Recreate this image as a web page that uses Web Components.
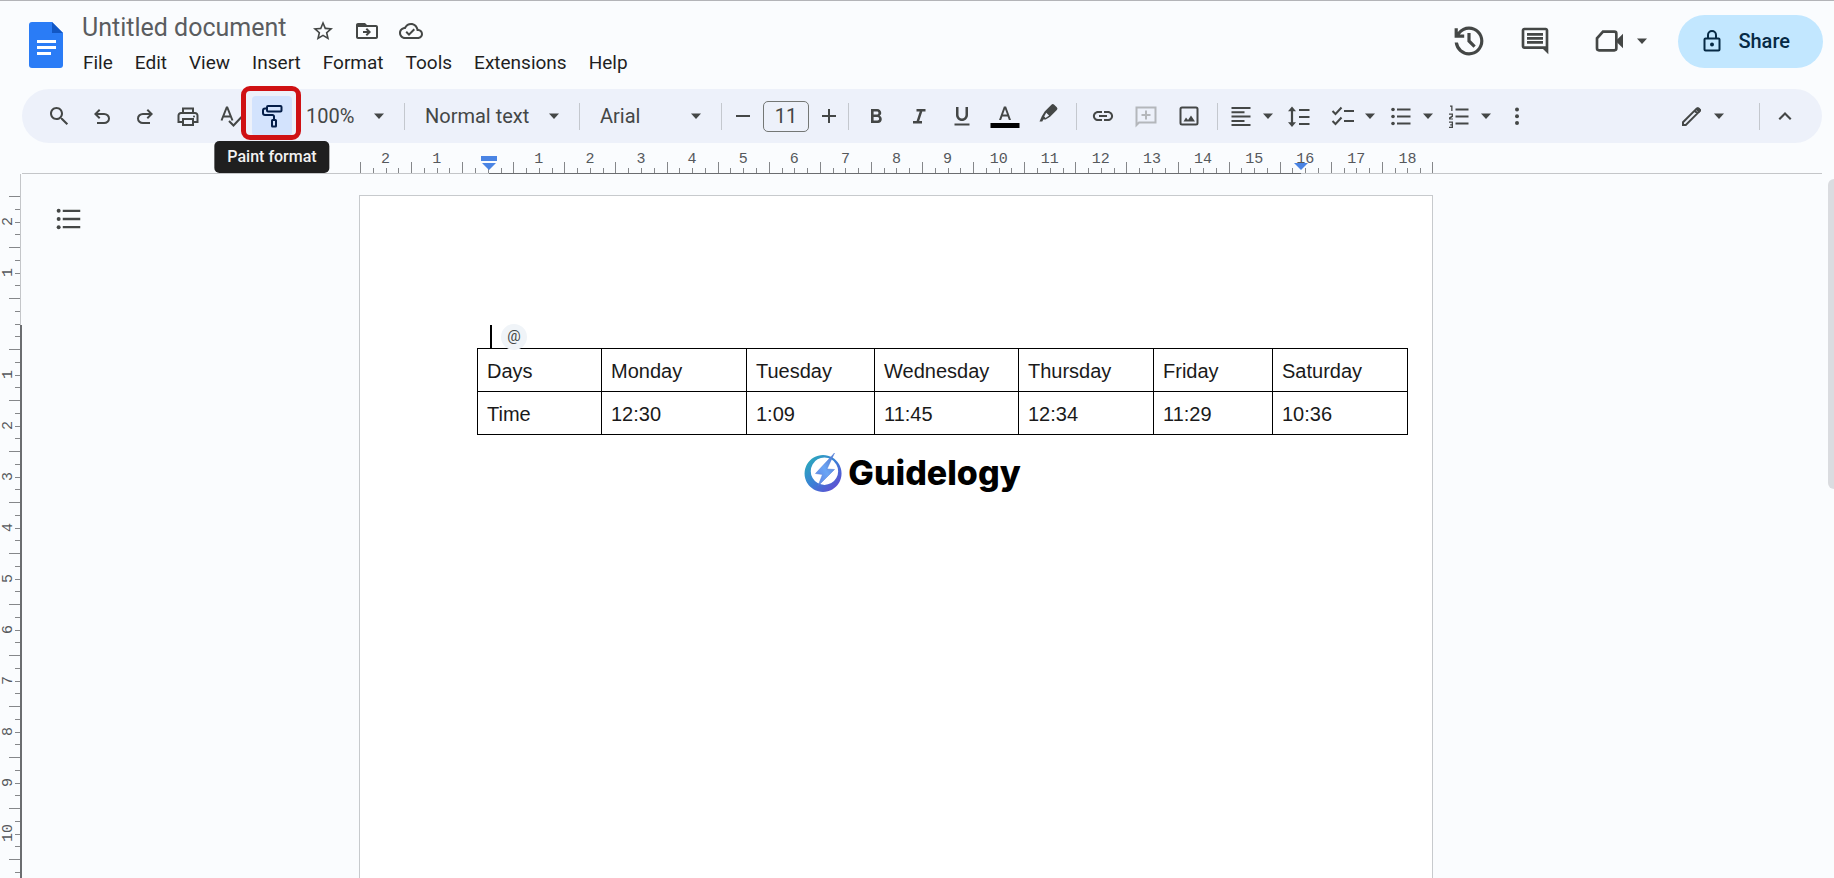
<!DOCTYPE html>
<html lang="en">
<head>
<meta charset="utf-8">
<title>Untitled document</title>
<style>
  body { margin: 0; font-family: Roboto, "Liberation Sans", sans-serif; background: #fafcfe; color: #444746; }
</style>
</head>
<body>
<docs-app></docs-app>
<script>
const ICONS = {
  star: '<path d="M22 9.24l-7.19-.62L12 2 9.19 8.63 2 9.24l5.46 4.73L5.82 21 12 17.27 18.18 21l-1.63-7.03L22 9.24zM12 15.4l-3.76 2.27 1-4.28-3.32-2.88 4.38-.38L12 6.1l1.71 4.04 4.38.38-3.32 2.88 1 4.28L12 15.4z"/>',
  move: '<path d="M21 6h-9l-2-2H3c-1.100 0-2 .9-2 2v12c0 1.100.9 2 2 2h18c1.100 0 2-.9 2-2V8c0-1.100-.9-2-2-2zm0 12H3V8h18v10z"/><path d="M12 17l4-4-4-4-1.400 1.400 1.600 1.600H8v2h4.200l-1.600 1.600z"/>',
  cloud: '<path d="M19.35 10.04C18.67 6.59 15.64 4 12 4 9.110 4 6.610 5.640 5.360 8.040 2.350 8.360 0 10.900 0 14c0 3.310 2.690 6 6 6h13c2.760 0 5-2.240 5-5 0-2.640-2.050-4.780-4.650-4.960zM19 18H6c-2.210 0-4-1.790-4-4 0-2.050 1.530-3.760 3.560-3.970l1.070-.11.5-.95C8.080 7.140 9.940 6 12 6c2.620 0 4.880 1.860 5.390 4.430l.3 1.500 1.530.11c1.560.1 2.780 1.410 2.780 2.960 0 1.650-1.350 3-3 3zm-9-3.820l-2.090-2.090L6.500 13.500 10 17l6.010-6.010-1.410-1.410z"/>',
  search: '<path d="M15.5 14h-.79l-.28-.27C15.41 12.59 16 11.11 16 9.5 16 5.91 13.09 3 9.5 3S3 5.91 3 9.5 5.91 16 9.5 16c1.61 0 3.09-.59 4.23-1.57l.27.28v.79l5.600 5.600 1.490-1.490zm-6 0C7.01 14 5 11.99 5 9.5S7.01 5 9.5 5 14 7.01 14 9.5 11.99 14 9.5 14z"/>',
  undo: '<path d="M7 20v-2h7.1q1.575 0 2.737-1T18 14.500 16.838 12 14.1 11H7.8l2.6 2.6L9 15 4 10l5-5 1.4 1.4L7.8 9h6.3q2.425 0 4.163 1.575T20 14.500t-1.737 3.925T14.1 20z"/>',
  redo: '<g transform="matrix(-1 0 0 1 24 0)"><path d="M7 20v-2h7.1q1.575 0 2.737-1T18 14.500 16.838 12 14.1 11H7.8l2.6 2.6L9 15 4 10l5-5 1.4 1.4L7.8 9h6.3q2.425 0 4.163 1.575T20 14.500t-1.737 3.925T14.1 20z"/></g>',
  print: '<g class="s"><path d="M7 9V4.500h10V9M7 18H2.500v-6.500A2.500 2.500 0 0 1 5 9h14a2.500 2.500 0 0 1 2.500 2.500V18H17M7 15h10v6H7z"/></g><circle cx="18" cy="12.500" r="1"/>',
  spell: '<g class="s"><path d="M2.500 16.500 7.700 3.500h.6l5.200 13M4.500 12.500h7M10 17l4.500 4.500 8-8.500"/></g>',
  paint: '<g class="s"><rect x="7" y="2" width="14.500" height="5.500" rx="1"/><path d="M7 4.500H5A2 2 0 0 0 3 6.500V9a2 2 0 0 0 2 2h7.500a1.500 1.500 0 0 1 1.500 1.500V16"/><rect x="12" y="16" width="4" height="6.500" rx=".5"/></g>',
  minus: '<path d="M5 11h14v2H5z"/>',
  plus: '<path d="M5 11h6V5h2v6h6v2h-6v6h-2v-6H5z"/>',
  bold: '<path d="M15.6 11.790c.97-.67 1.65-1.770 1.65-2.790 0-2.260-1.750-4-4-4H7v14h7.040c2.090 0 3.710-1.700 3.710-3.790 0-1.520-.86-2.820-2.150-3.420zM9.600 7.500h3.400c.83 0 1.500.67 1.500 1.500s-.67 1.500-1.500 1.500H9.600v-3zm3.900 9H9.600v-3.500h3.900c.96 0 1.600.8 1.600 1.750s-.64 1.750-1.600 1.750z"/>',
  italic: '<path d="M9.500 5v2.500h3.200l-3.100 9.500H6v2.500h9v-2.500h-2.800l3.100-9.500H18.500V5z"/>',
  underline: '<path d="M12 17c3.310 0 6-2.690 6-6V3h-2.500v8c0 1.930-1.570 3.500-3.500 3.500S8.500 12.930 8.500 11V3H6v8c0 3.310 2.690 6 6 6zm-7.500 2.500v2h15v-2z"/>',
  color: '<path d="M6 16h2.100l1.300-3.600h5.200L15.900 16H18L13.100 2.500h-2.200L6 16zm4-5.400 1.950-5.400h.1L14 10.600h-4z"/><path fill="#000" d="M-2.500 19h29v5h-29z"/>',
  marker: '<g transform="translate(0 -3)"><path fill-rule="evenodd" d="M3.500 20.500l2.300-5.200 2.900-4.900 6.700-6.700a2 2 0 0 1 2.800 0l2.600 2.600a2 2 0 0 1 0 2.800l-6.700 6.700-4.400 2.700h-2.400l-1 2zM10.200 11.700l2.900 2.900-3.500 2.300-1.400-1.400z"/></g>',
  link: '<path d="M3.9 12c0-1.71 1.39-3.1 3.1-3.1h4V6.900H7c-2.76 0-5.100 2.340-5.100 5.100s2.340 5.100 5.100 5.100h4v-2H7c-1.71 0-3.1-1.39-3.1-3.1zM8 13h8v-2H8v2zm9-6.100h-4v2h4c1.71 0 3.1 1.39 3.1 3.1s-1.39 3.1-3.1 3.1h-4v2h4c2.76 0 5.100-2.340 5.100-5.100s-2.340-5.100-5.100-5.100z"/>',
  addcomment: '<g class="s"><path d="M2.500 21V3.500h19v15H5L2.500 21zM12 6.500v9M7.500 11h9"/></g>',
  image: '<g class="s"><rect x="3.500" y="3.500" width="17" height="17" rx="1.500"/></g><path d="M6.500 17.500l2.500-4 2 2.500 3-4.500 4 6z"/>',
  align: '<path d="M2.500 3h19v2h-19zM2.500 7.300h13v2h-13zM2.500 11.600h19v2h-19zM2.500 15.900h13v2h-13zM2.500 20.100h19v2h-19z"/>',
  spacing: '<path d="M12 5h10.500v2H12zM12 12h10.500v2H12zM12 19h10.500v2H12zM5 2.500 9 7.300H6.100v10.900H9l-4 4.800-4-4.800h2.900V7.300H1z"/>',
  checklist: '<path d="M13 6h10v2H13zM13 16h10v2H13z"/><g class="s"><path d="M1.500 7l3 3L10.500 3.500M1.500 17l3 3 6-6.500"/></g>',
  bullets: '<circle cx="4" cy="5.500" r="1.800"/><circle cx="4" cy="12.500" r="1.800"/><circle cx="4" cy="19.500" r="1.800"/><path d="M8 4.500h13.500v2H8zM8 11.500h13.500v2H8zM8 18.500h13.500v2H8z"/>',
  numbered: '<path d="M8.500 4.500h13v2h-13zM8.500 11.500h13v2h-13zM8.500 18.500h13v2h-13zM3 1.500h2.500v5.500H4.200V2.700H3zM2 9.500h4v3.200l-2.600 1.700H6v1.200H2v-2l2.700-1.800v-1.100H2zM2 17.500h4V24H2v-1.200h2.700v-1.400H3.200v-1.200h1.500v-1.500H2z"/>',
  dots: '<circle cx="12" cy="5.500" r="2"/><circle cx="12" cy="12.300" r="2"/><circle cx="12" cy="19" r="2"/>',
  pencil: '<g class="s"><path d="M3 21v-2.800L16.600 4.600a1.200 1.200 0 0 1 1.700 0l1.100 1.100a1.200 1.200 0 0 1 0 1.700L5.800 21zM14.500 6.500l3 3"/></g><path d="M15.500 5.500l2-2h1.500l2 2V7l-2 2z"/>',
  up: '<path d="M12 8l-6.500 6.500 1.500 1.500L12 11l5 5 1.500-1.500z"/>',
  history: '<path d="M12 21q-3.450 0-6.013-2.288T3.050 13H5.100q.35 2.600 2.313 4.300T12 19q2.925 0 4.963-2.037T19 12t-2.037-4.963T12 5q-1.725 0-3.225.8T6.250 8H9v2H3V4h2v2.350q1.275-1.600 3.113-2.475T12 3q1.875 0 3.513.713t2.850 1.924 1.925 2.850T21 12t-.712 3.513-1.925 2.850-2.850 1.925T12 21m2.800-4.800L11 12.400V7h2v4.600l3.200 3.200z"/>',
  comment: '<path d="M21.990 4c0-1.100-.89-2-1.990-2H4c-1.100 0-2 .9-2 2v12c0 1.100.9 2 2 2h14l4 4-.01-18zM20 4v12H4V4h16zM6 12h12v2H6zm0-3h12v2H6zm0-3h12v2H6z"/>',
  video: '<g class="s"><path d="M7.500 5h8.500a1.500 1.500 0 0 1 1.500 1.500v11a1.500 1.500 0 0 1-1.500 1.500H4.500A1.500 1.500 0 0 1 3 17.500V10z"/></g><path d="M17 12l5.500-5.500v11z"/>',
  lock: '<g class="s"><rect x="4.500" y="9.500" width="15" height="12" rx="1"/><path d="M8 9.500V6a4 4 0 0 1 8 0v3.500"/></g><circle cx="12" cy="15.500" r="2"/>',
  outline: '<circle cx="4" cy="5" r="1.700"/><circle cx="4" cy="12" r="1.700"/><circle cx="4" cy="19" r="1.700"/><path d="M7.500 4h15v2h-15zM7.500 11h15v2h-15zM7.500 18h15v2h-15z"/>',
  arrow: '<path d="M0 6h24L12 19z"/>'
};
const VIEWBOX = { history: '2 2 20 20' };

class Base extends HTMLElement {
  connectedCallback() {
    if (this.shadowRoot) return;
    this.attachShadow({ mode: 'open' }).innerHTML =
      `<style>*{box-sizing:border-box}${this.constructor.css}</style>${this.render()}`;
  }
}

class DocsIcon extends Base {
  static css = `
    :host { display: block; flex: none; width: var(--icon, 24px); height: var(--icon, 24px); }
    :host([name=arrow]) { width: 10px; height: 10px; }
    svg { display: block; width: 100%; height: 100%; fill: currentColor; overflow: visible; }
    .s { fill: none; stroke: currentColor; stroke-width: 2; }`;
  render() {
    const n = this.getAttribute('name');
    return `<svg viewBox="${VIEWBOX[n] || '0 0 24 24'}" aria-hidden="true">${ICONS[n]}</svg>`;
  }
}

class ToolButton extends Base {
  static css = `
    :host { display: block; position: relative; flex: none; width: 43px; }
    :host([narrow]) { width: 24px; }
    :host([menu]) { width: 44px; }
    :host([active]) { width: 40px; }
    button { display: flex; align-items: center; justify-content: center; gap: 10px; width: 100%; height: 40px;
      padding: 0; border: 0; border-radius: 4px; background: none; color: inherit; font: inherit; }
    :host([menu]) button { justify-content: flex-start; }
    :host([active]) button { background: #d3e3fd; color: #041e49; }
    :host([off]) { color: #b4b7bb; }`;
  render() {
    const icon = this.getAttribute('icon'), label = this.getAttribute('label');
    return `<button type="button" aria-label="${label}" ${this.hasAttribute('off') ? 'disabled style="color:inherit"' : ''}>
      <docs-icon name="${icon}"></docs-icon>${this.hasAttribute('menu') ? '<docs-icon name="arrow"></docs-icon>' : ''}
    </button><slot></slot>`;
  }
}

class ToolSelect extends Base {
  static css = `
    :host { display: grid; flex: none; align-items: center; }
    select { grid-area: 1 / 1; appearance: none; width: 100%; height: 40px; border: 0; padding: 0 16px 0 0;
      background: none; color: inherit; font: 20px Roboto, sans-serif; }
    docs-icon { grid-area: 1 / 1; justify-self: end; pointer-events: none; }`;
  render() {
    return `<select aria-label="${this.getAttribute('label')}"><option>${this.getAttribute('value')}</option></select>
      <docs-icon name="arrow"></docs-icon>`;
  }
}

class DocsTooltip extends Base {
  static css = `
    :host { display: block; position: absolute; z-index: 3; top: 45px; left: 50%; transform: translateX(-50%);
      padding: 0 13px; border-radius: 5px; background: #1f1f1f; color: #f2f2f2;
      font-size: 16px; font-weight: 500; line-height: 32px; white-space: nowrap; }`;
  render() { return '<slot></slot>'; }
}

class CalloutFrame extends Base {
  static css = `
    :host { display: block; position: absolute; z-index: 2; inset: -10px -9px -4px -11px; pointer-events: none;
      border: 5px solid #cf1114; border-radius: 9px; }`;
  render() { return ''; }
}

class DocsMenuBar extends Base {
  static css = `
    :host { display: block; }
    nav { display: flex; gap: 20px; }
    button { padding: 0 1px; border: 0; background: none; color: #1f1f1f; font: 19px/28px Roboto, sans-serif; }`;
  render() {
    return `<nav aria-label="Menu bar">${['File', 'Edit', 'View', 'Insert', 'Format', 'Tools', 'Extensions', 'Help']
      .map(t => `<button type="button">${t}</button>`).join('')}</nav>`;
  }
}

class DocsHeader extends Base {
  static css = `
    :host { display: flex; align-items: flex-start; height: 89px; padding: 12px 11px 0 29px; border-top: 1px solid #b3b4b8; }
    .logo { flex: none; width: 34px; height: 46px; margin-top: 9px; }
    .names { margin-left: 19px; }
    .title { display: flex; align-items: flex-end; gap: 20px; height: 30px; margin-bottom: 6px; }
    input { width: 209px; height: 30px; padding: 0; border: 0; background: none; color: #5a5d60; font: 25px/30px Roboto, sans-serif; }
    button { display: flex; align-items: center; padding: 0; border: 0; background: none; color: inherit; }
    .actions { --icon: 32px; display: flex; align-items: center; gap: 34px; height: 54px; margin: 1px 0 0 auto; }
    .meet { gap: 12px; margin-left: 8px; }
    .share { --icon: 24px; gap: 14px; height: 53px; margin-left: -3px; padding: 0 33px 0 22px; border-radius: 27px;
      background: #c2e7ff; color: #062a45; font: 500 20px Roboto, sans-serif; }`;
  render() {
    return `
      <svg class="logo" viewBox="0 0 34 46" role="img" aria-label="Docs">
        <path fill="#2a7cf6" d="M3 0h20l11 11v32a3 3 0 0 1-3 3H3a3 3 0 0 1-3-3V3a3 3 0 0 1 3-3z"/>
        <path fill="#1257c4" d="M23 0l11 11H23z"/>
        <path fill="#fff" d="M8 18h19v3H8zM8 24h19v3H8zM8 30h14v3H8z"/>
      </svg>
      <div class="names">
        <div class="title">
          <input type="text" aria-label="Document title" value="Untitled document">
          <button type="button" aria-label="Star"><docs-icon name="star"></docs-icon></button>
          <button type="button" aria-label="Move"><docs-icon name="move"></docs-icon></button>
          <button type="button" aria-label="See document status"><docs-icon name="cloud"></docs-icon></button>
        </div>
        <docs-menu-bar></docs-menu-bar>
      </div>
      <div class="actions">
        <button type="button" aria-label="Version history"><docs-icon name="history"></docs-icon></button>
        <button type="button" aria-label="Comments"><docs-icon name="comment"></docs-icon></button>
        <button type="button" class="meet" aria-label="Join a call"><docs-icon name="video"></docs-icon><docs-icon name="arrow"></docs-icon></button>
        <button type="button" class="share"><docs-icon name="lock"></docs-icon>Share</button>
      </div>`;
  }
}

class DocsToolbar extends Base {
  static css = `
    :host { display: flex; align-items: center; height: 54px; margin: 0 12px 0 22px; padding: 0 25px 0 15px;
      border-radius: 27px; background: #edf1fa; }
    .group { display: flex; align-items: center; flex: none; }
    .rule { flex: none; width: 1px; height: 27px; background: #c4c8ce; }
    .rule.wide { margin: 0 20px; }
    .rule.before { margin-left: 20px; }
    .zoom { width: 78px; margin-left: 14px; }
    .style { width: 134px; }
    .font { width: 101px; }
    .size { gap: 8px; padding: 0 7px 0 9px; }
    .size input { width: 46px; height: 31px; padding: 0; border: 1px solid #747775; border-radius: 5px; background: none;
      color: inherit; font: 20px Roboto, sans-serif; text-align: center; }
    .format { padding: 0 7px 0 5px; }
    .link { padding: 0 7px 0 4px; }
    .para { gap: 14px; padding-left: 11px; }
    .para .line { margin-right: 6px; }
    .mode { margin-left: auto; }
    .mode .rule { margin: 0 13px 0 35px; }`;
  render() {
    const b = (icon, label, extra = '') => `<tool-button icon="${icon}" label="${label}" ${extra}></tool-button>`;
    return `
      <div class="group">
        ${b('search', 'Search the menus')}${b('undo', 'Undo')}${b('redo', 'Redo')}${b('print', 'Print')}${b('spell', 'Spelling and grammar check')}
        <tool-button icon="paint" label="Paint format" active><callout-frame></callout-frame><docs-tooltip>Paint format</docs-tooltip></tool-button>
      </div>
      <tool-select class="zoom" label="Zoom" value="100%"></tool-select><span class="rule wide"></span>
      <tool-select class="style" label="Styles" value="Normal text"></tool-select><span class="rule wide"></span>
      <tool-select class="font" label="Font" value="Arial"></tool-select><span class="rule before"></span>
      <div class="group size">
        ${b('minus', 'Decrease font size', 'narrow')}
        <input type="text" inputmode="numeric" aria-label="Font size" value="11">
        ${b('plus', 'Increase font size', 'narrow')}
      </div><span class="rule"></span>
      <div class="group format">
        ${b('bold', 'Bold')}${b('italic', 'Italic')}${b('underline', 'Underline')}${b('color', 'Text color')}${b('marker', 'Highlight color')}
      </div><span class="rule"></span>
      <div class="group link">
        ${b('link', 'Insert link')}${b('addcomment', 'Add comment', 'off')}${b('image', 'Insert image')}
      </div><span class="rule"></span>
      <div class="group para">
        ${b('align', 'Align', 'menu')}${b('spacing', 'Line spacing', 'narrow class="line"')}${b('checklist', 'Checklist', 'menu')}
        ${b('bullets', 'Bulleted list', 'menu')}${b('numbered', 'Numbered list', 'menu')}${b('dots', 'More', 'narrow')}
      </div>
      <div class="group mode">
        ${b('pencil', 'Editing mode', 'menu')}<span class="rule"></span>${b('up', 'Hide the menus', 'narrow')}
      </div>`;
  }
}

const cells = (n, extra = 0) =>
  ['2', '1', '', ...Array.from({ length: n }, (_, i) => String(i + 1)), ...Array(extra).fill('')]
    .map(t => `<div class="cell"><b>${t}</b><div class="ticks"><i></i><i></i><i></i><i></i></div></div>`).join('');

class RulerHorizontal extends Base {
  static css = `
    :host { display: grid; grid-template-columns: 1fr 1074px 1fr; flex: none; height: 31px; margin-left: 22px; padding-right: 64px;
      position: relative; font: 15px/16px "Liberation Mono", monospace; color: #55585c; }
    .base { position: absolute; inset: auto 12px 0 0; height: 1px; background: #c4c6c9; }
    .strip { grid-column: 2; position: relative; display: grid; grid-template-columns: repeat(21, 1fr); margin-left: 1px;
      padding-bottom: 1px; background: linear-gradient(90deg, #0000 12%, #6b6d70 12% 87.700%, #0000 87.700%) bottom / 100% 1px no-repeat; }
    .cell { display: grid; }
    .cell b { grid-area: 1 / 1; justify-self: center; margin-top: 9px; font-weight: 400; }
    .ticks { grid-area: 1 / 1; display: grid; grid-template-columns: repeat(4, 1fr); align-items: end; }
    i { height: 5px; border-left: 1px solid #85878a; }
    i:first-child, .last { height: 11px; }
    .last { position: absolute; right: 0; bottom: 1px; }
    svg { position: absolute; top: 13px; width: 16px; height: 14px; margin-left: -8px; fill: #4a84e4; }
    .start { left: 12%; } .end { left: 87.700%; }`;
  render() {
    return `<div class="base"></div><div class="strip">
      ${cells(18)}<i class="last"></i>
      <svg class="start" viewBox="0 0 16 14"><path d="M0 0h16v5H0zM1 7h14l-7 7z"/></svg>
      <svg class="end" viewBox="0 0 16 14"><path d="M1 7h14l-7 7z"/></svg></div>`;
  }
}

class RulerVertical extends Base {
  static css = `
    :host { display: block; overflow: hidden; font: 15px/18px "Liberation Mono", monospace; color: #55585c;
      background: linear-gradient(#c4c6c9, #c4c6c9) 20px 0 / 1px 151px no-repeat, linear-gradient(#6b6d70, #6b6d70) 20px 151px / 2px 100% no-repeat; }
    .strip { margin: 22px 2px 0 0; }
    .cell { display: grid; height: 51px; }
    .cell b { grid-area: 1 / 1; justify-self: start; align-self: center; writing-mode: vertical-rl; transform: rotate(180deg);
      font-weight: 400; }
    .ticks { grid-area: 1 / 1; display: grid; grid-template-rows: repeat(4, 1fr); justify-items: end; }
    i { width: 5px; border-top: 1px solid #85878a; }
    i:first-child { width: 11px; }`;
  render() { return `<div class="strip">${cells(10, 1)}</div>`; }
}

class ScheduleTable extends Base {
  static css = `
    :host { display: block; }
    table { border-collapse: collapse; table-layout: fixed; width: 931px; font: 20px "Liberation Sans", Arial, sans-serif; color: #1a1a1a; }
    th, td { height: 43px; padding: 2px 9px 0; border: 1px solid #000; font-weight: 400; text-align: left; }`;
  render() {
    const row = (tag, items) => `<tr>${items.map(c => `<${tag}>${c}</${tag}>`).join('')}</tr>`;
    return `<table><colgroup>${[124, 145, 128, 144, 135, 119, 135].map(w => `<col style="width:${w}px">`).join('')}</colgroup>
      <thead>${row('th', ['Days', 'Monday', 'Tuesday', 'Wednesday', 'Thursday', 'Friday', 'Saturday'])}</thead>
      <tbody>${row('td', ['Time', '12:30', '1:09', '11:45', '12:34', '11:29', '10:36'])}</tbody></table>`;
  }
}

class BrandMark extends Base {
  static css = `
    :host { display: flex; align-items: center; justify-content: center; gap: 6px; color: #000; font: 800 34px/40px Inter, sans-serif; }
    svg { width: 38px; height: 40px; flex: none; }`;
  render() {
    return `<svg viewBox="0 0 38 40" aria-hidden="true">
        <defs><linearGradient id="ring" x1="0" y1="0" x2="1" y2="1"><stop offset="0" stop-color="#27b3b5"/><stop offset=".5" stop-color="#3b7fd6"/><stop offset="1" stop-color="#6a3fd0"/></linearGradient>
        <linearGradient id="bolt" x1="1" y1="0" x2="0" y2="1"><stop offset="0" stop-color="#4f74c8"/><stop offset=".5" stop-color="#6aa5f5"/><stop offset="1" stop-color="#5b7fe0"/></linearGradient></defs>
        <path fill="url(#ring)" fill-rule="evenodd" d="M19 2a18.500 18.500 0 1 0 .1 0zM20.500 4.500a13.700 13.700 0 1 1-.1 0z"/>
        <path fill="url(#bolt)" stroke="#4a78d8" stroke-width=".5" d="M30.500 0L11.500 20.500l7 1L14 33l16.500-16.500-7.500-.5z"/>
      </svg><span>Guidelogy</span>`;
  }
}

class DocsPage extends Base {
  static css = `
    :host { display: block; height: 1520px; padding: 129px 0 0 117px; border: 1px solid #c7cacd; background: #fff; }
    .line { display: flex; align-items: center; height: 23px; padding-left: 13px; position: relative; z-index: 1; }
    .caret { width: 2px; height: 23px; background: #000; }
    .chip { display: flex; justify-content: center; width: 26px; height: 26px; margin-left: 9px; padding: 0; border: 0; border-radius: 13px;
      background: #f0f4f8; color: #444746; font: 15px/24px Roboto, sans-serif; }`;
  render() {
    return `<div class="line"><span class="caret"></span><button type="button" class="chip" aria-label="Insert smart chip">@</button></div>
      <slot></slot>`;
  }
}

class DocsApp extends Base {
  static css = `
    :host { display: flex; flex-direction: column; height: 100vh; overflow: hidden; }
    .work { flex: 1; min-height: 0; display: grid; grid-template: 100% / 22px 1fr; position: relative; overflow: hidden; }
    .canvas { display: grid; grid-template-columns: 1fr 1074px 1fr; align-items: start; padding: 21px 64px 0 0; overflow: hidden; }
    .outline { --icon: 28px; justify-self: start; margin: 10px 0 0 32px; padding: 0; border: 0; background: none; color: #444746; }
    brand-mark { margin-top: 18px; padding-right: 84px; }
    .thumb { position: absolute; top: 5px; right: 0; width: 6px; height: 310px; border-radius: 6px 0 0 6px; background: #dadce0; }`;
  render() {
    return `<docs-header></docs-header><docs-toolbar></docs-toolbar><ruler-horizontal></ruler-horizontal>
      <div class="work"><ruler-vertical></ruler-vertical>
        <main class="canvas">
          <button type="button" class="outline" aria-label="Show outline"><docs-icon name="outline"></docs-icon></button>
          <docs-page><schedule-table></schedule-table><brand-mark></brand-mark></docs-page>
        </main>
        <div class="thumb"></div>
      </div>`;
  }
}

for (const [tag, cls] of Object.entries({
  'docs-icon': DocsIcon, 'tool-button': ToolButton, 'tool-select': ToolSelect, 'docs-tooltip': DocsTooltip,
  'callout-frame': CalloutFrame, 'docs-menu-bar': DocsMenuBar, 'docs-header': DocsHeader, 'docs-toolbar': DocsToolbar,
  'ruler-horizontal': RulerHorizontal, 'ruler-vertical': RulerVertical, 'schedule-table': ScheduleTable,
  'brand-mark': BrandMark, 'docs-page': DocsPage, 'docs-app': DocsApp
})) customElements.define(tag, cls);
</script>
</body>
</html>
